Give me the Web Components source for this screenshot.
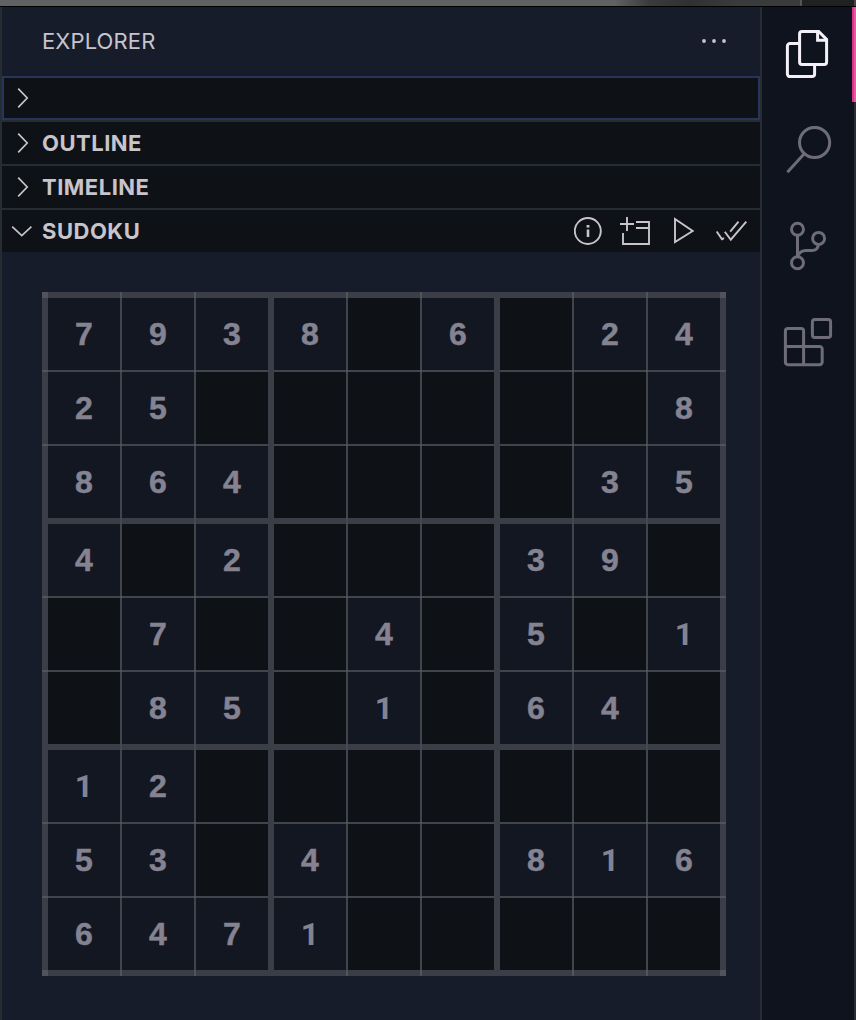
<!DOCTYPE html>
<html lang="en">
<head>
<meta charset="utf-8">
<title>Sudoku</title>
<style>
html,body{margin:0;height:100%;overflow:hidden;background:#0f131d}
</style>
</head>
<body>
<code-window></code-window>
<script>
const shadow=(el,html)=>{const t=document.createElement('template');t.innerHTML=html;const r=el.attachShadow({mode:'open'});r.append(t.content.cloneNode(true));return r;};

const ICONS={
right:['0 0 12 22','<path d="M1.2 1.7 10.2 11 1.2 20.3" stroke-width="1.7"/>',12,22],
down:['0 0 22 12','<path d="M1.2 1.7 10.8 10.7 20.4 1.7" stroke-width="1.7"/>',22,12],
more:['0 0 26 4','<g fill="currentColor" stroke="none"><circle cx="2" cy="2" r="1.9"/><circle cx="12" cy="2" r="1.9"/><circle cx="22" cy="2" r="1.9"/></g>',26,4],
info:['574 217 28 28','<circle cx="587.8" cy="231" r="13" stroke-width="1.9"/><path d="M588 229.5v7.5" stroke-width="2.6"/><path d="M588 225v2.6" stroke-width="2.8"/>',28,28],
add:['620 216 32 30','<path d="M620 224h14M627 217v14M636 222h13v22h-26v-11M636 228h13" stroke-width="1.9"/>',32,30],
play:['672 218 24 28','<path d="M675 220v23L692.7 232Z" stroke-width="1.9"/>',24,28],
checks:['715 220 34 22','<path d="M716.7 231.5 722 239.2 724 238.2M724.8 231.7 730.8 239.7 746.3 221.7M730.2 231.7 738.5 221.7" stroke-width="1.9"/>',34,22],
files:['784 29 46 52','<path d="M800 43.5H790a2.6 2.6 0 0 0-2.6 2.6V74a2.6 2.6 0 0 0 2.6 2.6H812a2.6 2.6 0 0 0 2.6-2.6V65M802 31.4H818.7L826.6 39.4V62a2.4 2.4 0 0 1-2.4 2.4H802a2.4 2.4 0 0 1-2.4-2.4V33.8a2.4 2.4 0 0 1 2.4-2.4Z" stroke-width="3"/><path d="M817.6 32V40.3H826" stroke-width="3"/>',46,52],
search:['782 126 50 50','<circle cx="814.6" cy="142.5" r="15.1" stroke-width="3"/><path d="M804.2 153.8 787.4 172.3" stroke-width="3"/>',50,50],
branch:['786 221 42 52','<g stroke-width="3"><circle cx="797.5" cy="229.3" r="6"/><circle cx="818.6" cy="238.4" r="6"/><circle cx="797.5" cy="262.7" r="6"/><path d="M797.5 235.3V256.7M797.8 256.7C799 252.5 802 250.6 806 250.6H812C815.5 250.6 818 248.5 818.5 244.4"/></g>',42,52],
blocks:['781 317 52 52','<g stroke-width="3"><rect x="812.4" y="319.4" width="18.2" height="18.2" rx="2.5"/><path d="M785.4 331a2.6 2.6 0 0 1 2.6-2.6h13a2.6 2.6 0 0 1 2.6 2.6v15.5h16a2.6 2.6 0 0 1 2.6 2.6v13a2.6 2.6 0 0 1-2.6 2.6H788a2.6 2.6 0 0 1-2.6-2.6ZM785.4 346.5h18.2v18"/></g>',52,52]
};
customElements.define('line-icon',class extends HTMLElement{
connectedCallback(){const [v,p,w,h]=ICONS[this.getAttribute('name')];
shadow(this,`<style>:host{display:block;flex:none;width:${w}px;height:${h}px}svg{display:block}</style><svg viewBox="${v}" width="${w}" height="${h}" fill="none" stroke="currentColor">${p}</svg>`);}
});

customElements.define('panel-section',class extends HTMLElement{
connectedCallback(){
const open=this.hasAttribute('open');
shadow(this,`<style>
:host{display:flex;align-items:center;box-sizing:border-box;height:44px;background:#0e1115;color:#c8c4cc;border-bottom:2px solid #252d33}
:host([open]){height:42px;border-bottom:0}
:host([focused]){box-sizing:border-box;height:46px;box-shadow:inset 0 0 0 2px #29345a}
.twist{width:40px;flex:none;display:flex;box-sizing:border-box;padding-left:${open?9:15}px}
h2{margin:0;font:700 22px/42px Inter,sans-serif;letter-spacing:.5px;flex:1;white-space:nowrap}
.actions{display:flex;align-items:center}
</style><div class="twist"><line-icon name="${open?'down':'right'}"></line-icon></div><h2><slot></slot></h2><div class="actions"><slot name="actions"></slot></div>`);}
});

customElements.define('sudoku-cell',class extends HTMLElement{
connectedCallback(){shadow(this,`<style>
:host{display:flex;align-items:center;justify-content:center;background:#0e1115;color:#858391;font:700 32px/72px "Liberation Sans",Arial,sans-serif;-webkit-text-stroke:.5px #858391}
:host([given]){background:#131721}
:host([plain-one]){font-family:Roboto,sans-serif;-webkit-text-stroke-width:0}
</style><slot></slot>`);}
});

customElements.define('sudoku-board',class extends HTMLElement{
connectedCallback(){
const rows=['7938.6.24','25......8','864....35','4.2...39.','.7..4.5.1','.85.1.64.','12.......','53.4..816','6471.....'];
let boxes='';
for(let br=0;br<3;br++)for(let bc=0;bc<3;bc++){
boxes+='<div class="box">';
for(let r=0;r<3;r++)for(let c=0;c<3;c++){const v=rows[br*3+r][bc*3+c];boxes+=v==='.'?'<sudoku-cell></sudoku-cell>':`<sudoku-cell given${v==='1'?' plain-one':''}>${v}</sudoku-cell>`;}
boxes+='</div>';}
const ticks=[78,152,304,378,530,604];
const t='linear-gradient(#52545c,#52545c)';
const s='linear-gradient(#474951,#474951)';
const bg=[];
ticks.forEach(p=>{bg.push(`${t} ${p}px 0/2px 6px`,`${t} ${p}px 678px/2px 6px`,`${t} 0 ${p}px/6px 2px`,`${t} 678px ${p}px/6px 2px`,`${s} ${p}px 226px/2px 6px`,`${s} ${p}px 452px/2px 6px`);});
[[0,0],[678,0],[0,678],[678,678]].forEach(([x,y])=>bg.push(`${t} ${x}px ${y}px/6px 6px`));
const cross=[[72,72],[146,72],[72,146],[146,146]].map(([x,y])=>`${t} ${x}px ${y}px/2px 2px no-repeat`).join(',');
shadow(this,`<style>
:host{display:grid;box-sizing:border-box;width:684px;height:684px;padding:6px;gap:6px;grid-template-columns:repeat(3,220px);grid-template-rows:repeat(3,220px);background:${bg.map(b=>b+' no-repeat').join(',')},#3c3e47}
.box{display:grid;grid-template-columns:repeat(3,72px);grid-template-rows:repeat(3,72px);gap:2px;background:${cross},#42444c}
</style>${boxes}`);}
});

customElements.define('side-panel',class extends HTMLElement{
connectedCallback(){shadow(this,`<style>
:host{display:flex;flex-direction:column;box-sizing:border-box;width:762px;border:solid #252d33;border-width:0 2px;background:#171c2b;color:#c8c4cc}
header{display:flex;align-items:center;justify-content:space-between;height:69px;box-sizing:border-box;padding:0 32px 2px 40px}
h1{margin:0;font:400 22px/30px Inter,sans-serif;letter-spacing:.13px}
main{padding:40px 0 0 40px}
.acts{display:flex;align-items:center;padding-right:11px}
.acts line-icon:nth-child(2){margin-left:18px}
.acts line-icon:nth-child(3){margin-left:20px}
.acts line-icon:nth-child(4){margin-left:19px}
</style>
<header><h1>EXPLORER</h1><line-icon name="more"></line-icon></header>
<panel-section focused></panel-section>
<panel-section>OUTLINE</panel-section>
<panel-section>TIMELINE</panel-section>
<panel-section open>SUDOKU<div class="acts" slot="actions"><line-icon name="info"></line-icon><line-icon name="add"></line-icon><line-icon name="play"></line-icon><line-icon name="checks"></line-icon></div></panel-section>
<main><sudoku-board></sudoku-board></main>`);}
});

customElements.define('activity-bar',class extends HTMLElement{
connectedCallback(){shadow(this,`<style>
:host{display:flex;flex:1;background:#0f131d;color:#6d6c78}
nav{flex:1;display:grid;grid-template-rows:repeat(4,96px);justify-items:center;align-items:center;align-content:start;box-sizing:border-box;width:90px}
.on{color:#f4f0f7}
.edge{width:4px;display:flex;flex-direction:column}
.mark{height:95px;background:linear-gradient(90deg,#dc348b 50%,#e75aa3 50%)}
.rest{flex:1;background:linear-gradient(90deg,transparent 50%,#292d35 50%)}
</style><nav><line-icon class="on" name="files"></line-icon><line-icon name="search"></line-icon><line-icon name="branch"></line-icon><line-icon name="blocks"></line-icon></nav><div class="edge"><div class="mark"></div><div class="rest"></div></div>`);}
});

customElements.define('code-window',class extends HTMLElement{
connectedCallback(){shadow(this,`<style>
:host{display:flex;flex-direction:column;width:856px;height:1020px;overflow:hidden}
.top{height:7px;flex:none;box-sizing:border-box;border-bottom:1px solid #000;background:linear-gradient(90deg,#606162 0 615px,#393a3b 650px,#303132 690px,#3a3b3c 740px 800px,#555 800px 802px,#202122 802px 854px,#444 854px)}
.body{display:flex;flex:1;min-height:0}
</style><div class="top"></div><div class="body"><side-panel></side-panel><activity-bar></activity-bar></div>`);}
});
</script>
</body>
</html>
